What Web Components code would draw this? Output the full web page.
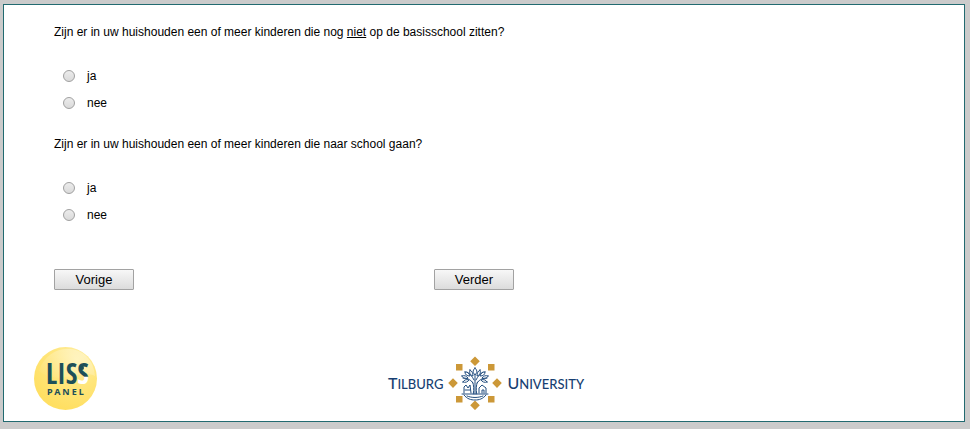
<!DOCTYPE html>
<html lang="nl">
<head>
<meta charset="utf-8">
<title>Vragenlijst</title>
<style>
  html { background: #cbcbcb; }
  body { margin: 4px 5px 7px 3px; font: 12px/16px "Liberation Sans", Arial, sans-serif; color: #000; }
</style>
</head>
<body>
<survey-page>
  <survey-question name="basisschool">Zijn er in uw huishouden een of meer kinderen die nog <u>niet</u> op de basisschool zitten?</survey-question>
  <survey-question name="school">Zijn er in uw huishouden een of meer kinderen die naar school gaan?</survey-question>
  <survey-button slot="nav">Vorige</survey-button>
  <survey-button slot="nav">Verder</survey-button>
  <liss-logo slot="footer"></liss-logo>
  <tilburg-logo slot="footer"></tilburg-logo>
</survey-page>
<script>
class BaseElement extends HTMLElement {
  constructor() {
    super();
    this.attachShadow({ mode: 'open' }).innerHTML = this.constructor.markup;
  }
}

class SurveyPage extends BaseElement {
  static markup = `
    <style>
      :host { display: block; box-sizing: border-box; background: #fff; border: 1px solid #226a70;
              box-shadow: 0 0 8px rgba(0,0,0,.2); padding: 19px 26px 11px 30px; }
      form { display: flex; flex-direction: column; gap: 20px; padding-left: 20px; }
      nav { display: grid; grid-template-columns: 380px auto; justify-content: start; margin-top: 21px; }
      footer { display: grid; grid-template-columns: 1fr auto 1fr; align-items: end; margin-top: 57px; }
    </style>
    <form>
      <slot></slot>
      <nav><slot name="nav"></slot></nav>
    </form>
    <footer><slot name="footer"></slot></footer>`;
}

class SurveyQuestion extends BaseElement {
  static markup = `
    <style>
      :host { display: block; }
      fieldset { border: 0; margin: 0; padding: 0; min-width: 0; }
      legend { padding: 0; margin-bottom: 22px; }
      label { display: flex; align-items: center; gap: 12px; height: 27px; padding-left: 9px; }
      input { appearance: none; box-sizing: border-box; width: 12px; height: 12px; margin: 0; border-radius: 50%;
              border: 1px solid #a0a0a0; background: linear-gradient(#ececec, #dadada); }
      input:checked { background: radial-gradient(#444 0 3px, #e4e4e4 4px); }
    </style>
    <fieldset>
      <legend><slot></slot></legend>
      <label><input type="radio" value="ja">ja</label>
      <label><input type="radio" value="nee">nee</label>
    </fieldset>`;
  connectedCallback() {
    for (const input of this.shadowRoot.querySelectorAll('input')) input.name = this.getAttribute('name');
  }
}

class SurveyButton extends BaseElement {
  static markup = `
    <style>
      :host { display: block; width: 80px; }
      button { display: block; box-sizing: border-box; width: 100%; height: 21px; padding: 0; color: #000;
               font: 13px/19px "Liberation Sans", Arial, sans-serif; border: 1px solid #a2a2a2; border-radius: 1px;
               background: linear-gradient(#f7f7f7, #dcdcdc); }
    </style>
    <button type="button"><slot></slot></button>`;
}

class LissLogo extends BaseElement {
  static markup = `
    <style>
      :host { display: block; }
      svg { display: block; }
      text { font-family: "Open Sans Condensed", "Liberation Sans Narrow", "Liberation Sans", sans-serif; font-weight: bold; fill: #1d4f59; }
      .panel { font-family: "Noto Sans", sans-serif; font-size: 9px; letter-spacing: 2px; }
    </style>
    <svg width="63" height="63" viewBox="0 0 63 63" role="img" aria-label="LISS Panel">
      <defs>
        <radialGradient id="sun" cx=".68" cy=".2" r=".8">
          <stop offset="0" stop-color="#fff0a8"/><stop offset=".5" stop-color="#ffe67d"/><stop offset="1" stop-color="#ffdf62"/>
        </radialGradient>
        <linearGradient id="shine" x1="1" y1="0" x2="0" y2="1">
          <stop offset="0" stop-color="#fff" stop-opacity=".4"/><stop offset="1" stop-color="#fff" stop-opacity="0"/>
        </linearGradient>
        <linearGradient id="tail" gradientUnits="userSpaceOnUse" x1="0" y1="14" x2="0" y2="38">
          <stop offset=".64" stop-color="#1d4f59"/><stop offset=".66" stop-color="#fff"/>
        </linearGradient>
      </defs>
      <circle cx="31.500" cy="31.500" r="31.500" fill="url(#sun)"/>
      <path d="M5 24C10 8 23 1 36 2c14 1 24 12 25 27C47 21 24 40 5 24Z" fill="url(#shine)"/>
      <text x="12" y="37" font-size="28">LIS<tspan style="fill:url(#tail)">S</tspan></text>
      <circle cx="48" cy="21" r="2" fill="#1d4f59"/>
      <text class="panel" x="13" y="48">PANEL</text>
    </svg>`;
}

class TilburgLogo extends BaseElement {
  static markup = `
    <style>
      :host { display: flex; align-items: center; gap: 5px; color: #173f72; }
      span { display: block; font: 13px/20px Lato, sans-serif; font-weight: 500; text-transform: uppercase; }
      span::first-letter { font-size: 16px; }
      svg { display: block; }
    </style>
    <span>Tilburg</span>
    <svg width="54" height="54" viewBox="0 0 54 54" aria-hidden="true">
      <g fill="#cc9838">
        <path d="M27 0.500l4.800 4.800-4.800 4.800-4.800-4.800ZM27 44.500l4.800 4.800-4.800 4.800-4.800-4.800ZM5 22.300l4.800 4.800L5 31.900.200 27.100ZM49 22.300l4.800 4.800-4.800 4.800-4.800-4.800Z"/>
        <path d="M8 8h6.500v6.500H8ZM40 8h6.500v6.500H40ZM8 40h6.500v6.500H8ZM40 40h6.500v6.500H40Z"/>
      </g>
      <g fill="none" stroke="#244f80" stroke-width="1" stroke-linecap="round">
        <path d="M25.300 38c.8-5 .6-9-.8-12M28.700 38c-.8-5-.6-9 .8-12M27 38V18M25 27c-3-4-6-5-10-5M29 27c3-4 6-5 10-5M26 24c-2-4-4-6-7-8M28 24c2-4 4-6 7-8"/>
        <path d="M27 12c-3 3-2 5 0 7 2-2 3-4 0-7ZM22 14c-1 3 0 5 3 6 0-3-1-5-3-6ZM32 14c1 3 0 5-3 6 0-3 1-5 3-6ZM17 16c0 3 2 4 5 4-1-3-2-4-5-4ZM37 16c0 3-2 4-5 4 1-3 2-4 5-4ZM14 20c1 3 4 3 6 2-2-2-3-3-6-2ZM40 20c-1 3-4 3-6 2 2-2 3-3 6-2ZM15 26c2 1 5 0 6-2-3-1-5 0-6 2ZM39 26c-2 1-5 0-6-2 3-1 5 0 6 2Z"/>
        <path d="M16 37v-6l2-2 2 3 2-3 1 8M17 34h5M31 37v-5l3-3 4 3v5M34 37v-3h2v3M14 38h26M16 39c3 4 7 5 11 5s8-1 11-5M19 40c5 2 11 2 16 0"/>
      </g>
    </svg>
    <span>University</span>`;
}

customElements.define('survey-page', SurveyPage);
customElements.define('survey-question', SurveyQuestion);
customElements.define('survey-button', SurveyButton);
customElements.define('liss-logo', LissLogo);
customElements.define('tilburg-logo', TilburgLogo);
</script>
</body>
</html>
